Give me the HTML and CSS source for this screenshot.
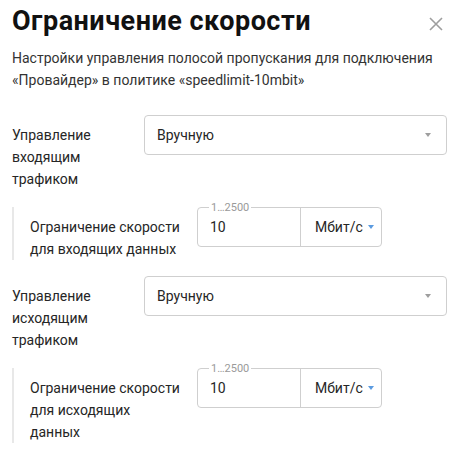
FILE: index.html
```html
<!DOCTYPE html>
<html lang="ru">
<head>
<meta charset="utf-8">
<link rel="stylesheet" href="styles.css">
</head>
<body>
<div class="dialog">
  <div class="header">
    <h1 class="title">Ограничение скорости</h1>
    <button class="close" aria-label="Закрыть">
      <svg width="14" height="14" viewBox="0 0 14 14"><path d="M1 1L13 13M13 1L1 13" stroke="#9e9e9e" stroke-width="1.6" fill="none"/></svg>
    </button>
  </div>
  <p class="desc">Настройки управления полосой пропускания для подключения «Провайдер» в политике «speedlimit-10mbit»</p>

  <div class="row">
    <div class="label">Управление входящим трафиком</div>
    <div class="select">
      <span class="select-value">Вручную</span>
      <span class="arrow grey"></span>
    </div>
  </div>
  <div class="sub">
    <div class="sub-label">Ограничение скорости для входящих данных</div>
    <div class="group">
      <div class="num">
        <span class="legend">1…2500</span>
        <span>10</span>
      </div>
      <div class="unit">
        <span>Мбит/с</span>
        <span class="arrow blue"></span>
      </div>
    </div>
  </div>

  <div class="row">
    <div class="label">Управление исходящим трафиком</div>
    <div class="select">
      <span class="select-value">Вручную</span>
      <span class="arrow grey"></span>
    </div>
  </div>
  <div class="sub">
    <div class="sub-label">Ограничение скорости для исходящих данных</div>
    <div class="group">
      <div class="num">
        <span class="legend">1…2500</span>
        <span>10</span>
      </div>
      <div class="unit">
        <span>Мбит/с</span>
        <span class="arrow blue"></span>
      </div>
    </div>
  </div>
</div>
</body>
</html>
```
FILE: styles.css
```css
* { box-sizing: border-box; }
html, body { margin: 0; padding: 0; background: #fff; }
body {
  font-family: Roboto, "Noto Sans", Arial, sans-serif;
  font-size: 14px;
  line-height: 22px;
  color: #262626;
}
.dialog {
  width: 460px;
  padding: 5px 13px 0 12px;
}
.header {
  display: flex;
  align-items: flex-start;
  justify-content: space-between;
}
.title {
  margin: 0;
  font-size: 27px;
  line-height: 32px;
  letter-spacing: 0.5px;
  font-weight: 700;
  color: #111;
}
.close {
  border: 0;
  background: none;
  padding: 0;
  margin: 12px 4px 0 0;
  width: 14px;
  height: 14px;
  display: block;
}
.close svg { display: block; }
.desc {
  margin: 10px 0 0;
  color: #333;
}
.row {
  display: flex;
  gap: 12px;
  margin-top: 24px;
}
.row + .sub { margin-top: 17px; }
.sub + .row { margin-top: 16px; }
.label {
  width: 120px;
  flex: none;
  padding-top: 9px;
}
.select {
  flex: 1;
  height: 40px;
  border: 1px solid #cfcfcf;
  border-radius: 4px;
  padding: 8px 12px;
  display: flex;
  align-items: center;
  justify-content: space-between;
}
.arrow {
  width: 0;
  height: 0;
  border-left: 3px solid transparent;
  border-right: 3px solid transparent;
  border-top: 4px solid #9e9e9e;
}
.arrow.grey { margin-right: 3px; }
.arrow.blue { border-top-color: #5b9be0; margin-left: 5px; }
.sub {
  display: flex;
  gap: 14px;
  border-left: 2px solid #e8e8e8;
  padding-left: 16px;
}
.sub-label {
  width: 153px;
  flex: none;
  padding-top: 9px;
}
.group {
  display: flex;
  height: 40px;
  border: 1px solid #cfcfcf;
  border-radius: 4px;
}
.num {
  position: relative;
  width: 103px;
  padding: 8px 12px;
  border-right: 1px solid #cfcfcf;
}
.legend {
  position: absolute;
  top: -7px;
  left: 11px;
  padding: 0 2px;
  background: #fff;
  font-size: 11px;
  line-height: 13px;
  color: #9a9a9a;
}
.unit {
  width: 80px;
  padding: 0 0 0 14px;
  display: flex;
  align-items: center;
  height: 38px;
}
```
